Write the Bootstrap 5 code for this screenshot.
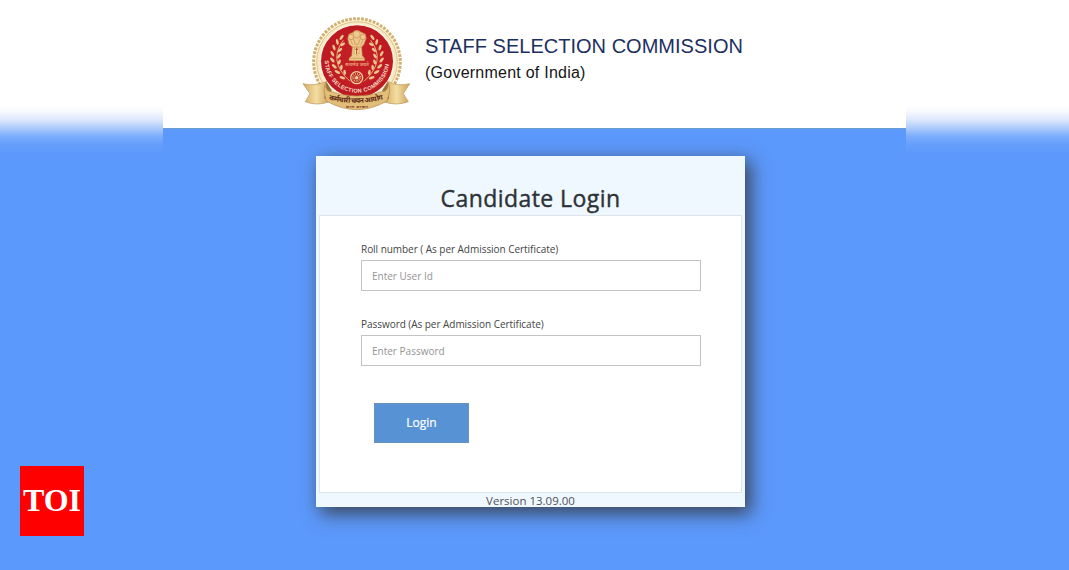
<!DOCTYPE html>
<html lang="en">
<head>
<meta charset="utf-8">
<meta name="viewport" content="width=device-width, initial-scale=1">
<title>Candidate Login</title>
<link href="https://cdn.jsdelivr.net/npm/bootstrap@5.3.0/dist/css/bootstrap.min.css" rel="stylesheet">
<style>
body{height:570px;overflow:hidden;font-family:"Open Sans",sans-serif;color:#333;
 background:linear-gradient(#fff 0,#fff 106px,#f3f6fc 113px,#dbe7fc 120px,#aecbfd 128px,#7eaefc 136px,#669ffb 144px,#5c99fc 154px)}
.page-col{width:743px;margin-left:163px;height:570px;background:#5c99fc}
.masthead{height:129px;border-bottom:1px solid #6b9dd0;padding:8px 0 0 133px}
.org{font-family:"Liberation Sans",Arial,sans-serif;padding:26px 0 0 9px;white-space:nowrap}
.org-name{font-size:20px;line-height:24px;color:#1d2f5f;letter-spacing:.02px}
.org-sub{font-size:16px;line-height:20px;margin-top:5px;color:#161616;letter-spacing:.24px}
.login-panel{width:429px;height:351px;margin:27px 0 0 153px;background:#f0f8ff;border-top:1px solid #f0f8ff;padding:0 3px;box-shadow:5px 6px 17px 1px #333c}
.panel-title{height:58px;font-size:23px;font-weight:500;line-height:31px;padding-top:26px;letter-spacing:.43px;color:#2d3238;-webkit-text-stroke:.4px #2d3238}
.panel-form{height:278px;border:1px solid #dfe5ea;padding:25px 40px 0 41px}
.field-label{font-size:10px;line-height:16px;color:#444;white-space:nowrap;margin-bottom:3px;letter-spacing:-.04px}
.field-label.second{margin-top:25px}
.form-control.entry{height:31px;font-size:10px;padding:0 10px;border:1px solid #c3c3c3;border-radius:0}
.entry::placeholder{color:#949494}
.btn.login-btn{width:95px;height:40px;margin:37px 0 0 13px;font-size:12px;font-weight:500;line-height:38px;background:#5792d5;color:#fff;border:1px solid #6992b8;border-radius:0;-webkit-text-stroke:.2px #fff}
.version{font-size:11.5px;line-height:15px;color:#4c5358}
.toi{left:20px;top:466px;width:64px;height:70px;background:#f00;color:#fff;font:bold 32px/69px "Liberation Serif",serif}
</style>
</head>
<body>
<main class="page-col">
 <header class="masthead bg-white d-flex align-items-start">
  <svg class="flex-shrink-0" width="120" height="110" viewBox="0 0 360 330" role="img" aria-label="Emblem">
   <defs>
    <linearGradient id="gold" x1="0" x2="1"><stop offset="0" stop-color="#d3ab62"/><stop offset=".5" stop-color="#f3dda2"/><stop offset="1" stop-color="#cda25a"/></linearGradient>
    <path id="ring" d="M86 158 A97 98 0 0 0 280 154"/>
    <g id="laurel" fill="#e9c48b">
     <path d="M142 97 Q94 158 162 220" fill="none" stroke="#e1b67a" stroke-width="3"/>
     <ellipse cx="137" cy="88" rx="4" ry="9" transform="rotate(35 137 88)"/>
     <ellipse cx="124" cy="102" rx="4" ry="9" transform="rotate(-12 124 102)"/><ellipse cx="140" cy="109" rx="4" ry="8" transform="rotate(60 140 109)"/>
     <ellipse cx="114" cy="119" rx="4" ry="9" transform="rotate(-20 114 119)"/><ellipse cx="132" cy="126" rx="4" ry="8" transform="rotate(48 132 126)"/>
     <ellipse cx="109" cy="137" rx="4" ry="9" transform="rotate(-30 109 137)"/><ellipse cx="129" cy="144" rx="4" ry="8" transform="rotate(35 129 144)"/>
     <ellipse cx="109" cy="156" rx="4" ry="9" transform="rotate(-42 109 156)"/><ellipse cx="130" cy="162" rx="4" ry="8" transform="rotate(20 130 162)"/>
     <ellipse cx="115" cy="175" rx="4" ry="9" transform="rotate(-52 115 175)"/><ellipse cx="136" cy="178" rx="4" ry="8" transform="rotate(5 136 178)"/>
     <ellipse cx="124" cy="192" rx="4" ry="9" transform="rotate(-62 124 192)"/><ellipse cx="146" cy="193" rx="4" ry="8" transform="rotate(-8 146 193)"/>
     <ellipse cx="139" cy="209" rx="4" ry="9" transform="rotate(-70 139 209)"/>
    </g>
   </defs>
   <circle cx="183" cy="162" r="130" fill="#fff3d6" stroke="#cfae70" stroke-width="9" stroke-dasharray="8 4"/>
   <circle cx="183" cy="162" r="121" fill="#f6e9c4" stroke="#dcc38b" stroke-width="3"/>
   <circle cx="183" cy="160" r="110" fill="#bd1a22" stroke="#fbf4df" stroke-width="4"/>
   <circle cx="183" cy="158" r="79" fill="#c31d25"/>
   <use href="#laurel"/><use href="#laurel" transform="translate(366 0) scale(-1 1)"/>
   <g fill="#ecc98d" stroke="#c2773b" stroke-width="1.5">
    <path d="M169 74 Q182 60 196 73 L208 78 L211 91 L204 109 L197 117 L199 143 L206 151 L206 158 H159 V151 L167 143 L169 117 L159 109 L155 91 L159 78Z"/>
    <circle cx="182" cy="79" r="11"/><circle cx="165" cy="87" r="8"/><circle cx="201" cy="87" r="8"/>
    <path d="M173 91 L177 109 L187 109 L193 91M164 96 L170 111M202 96 L194 111M166 117H200" fill="none"/>
    <ellipse cx="182" cy="129" rx="8" ry="12" fill="#f6dfad"/><path d="M182 119V138M178 124H186" fill="none" stroke="#a64728" stroke-width="3"/>
    <path d="M160 151H206" fill="none"/>
   </g>
   <text x="183" y="174" text-anchor="middle" textLength="70" font-family="Noto Sans,sans-serif" font-size="13" font-weight="700" fill="#eba079">सत्यमेव जयते</text>
   <circle cx="182" cy="209" r="18" fill="#b61b20" stroke="#edcf98" stroke-width="4"/>
   <circle cx="182" cy="209" r="10" fill="none" stroke="#e2b77e" stroke-width="8" stroke-dasharray="2.5 2.7"/><circle cx="182" cy="209" r="5" fill="#f2d7a3"/>
   <text font-family="Liberation Sans,sans-serif" font-size="17" font-weight="700" fill="#f8ddc5"><textPath href="#ring" textLength="290">STAFF SELECTION COMMISSION</textPath></text>
   <path d="M21 227 Q55 236 91 221 L101 281 Q62 295 28 281 L42 257Z" fill="url(#gold)" stroke="#ba955a" stroke-width="2"/>
   <path d="M341 227 Q307 236 275 221 L263 281 Q300 295 337 281 L322 257Z" fill="url(#gold)" stroke="#ba955a" stroke-width="2"/>
   <path d="M91 221 L107 247 L101 283 L85 271Z M275 221 L259 247 L263 283 L279 271Z" fill="#99713c"/>
   <path d="M91 221 Q86 238 95 248 Q182 280 269 248 Q280 238 275 221 Q288 239 273 279 Q182 331 91 279 Q78 239 91 221Z" fill="#e2bd77" stroke="#b58747" stroke-width="2"/>
   <path id="rib" d="M98 275 Q182 296 267 273" fill="none"/>
   <text font-family="Noto Sans,sans-serif" font-size="22" font-weight="700" fill="#612b17"><textPath href="#rib" textLength="165">कर्मचारी चयन आयोग</textPath></text>
   <text x="182" y="300" text-anchor="middle" textLength="66" font-family="Noto Sans,sans-serif" font-size="10" font-weight="700" fill="#792d19">भारत सरकार</text>
  </svg>
  <div class="org">
   <div class="org-name">STAFF SELECTION COMMISSION</div>
   <div class="org-sub">(Government of India)</div>
  </div>
 </header>
 <section class="login-panel">
  <h1 class="panel-title text-center mb-0">Candidate Login</h1>
  <form class="panel-form bg-white">
   <div class="field-label">Roll number ( As per Admission Certificate)</div>
   <input class="form-control entry" type="text" placeholder="Enter User Id">
   <div class="field-label second">Password (As per Admission Certificate)</div>
   <input class="form-control entry" type="password" placeholder="Enter Password">
   <button class="btn login-btn p-0 d-block" type="button">Login</button>
  </form>
  <div class="version text-center">Version 13.09.00</div>
 </section>
</main>
<div class="toi position-absolute text-center">TOI</div>
<script src="https://cdn.jsdelivr.net/npm/bootstrap@5.3.0/dist/js/bootstrap.bundle.min.js"></script>
</body>
</html>
